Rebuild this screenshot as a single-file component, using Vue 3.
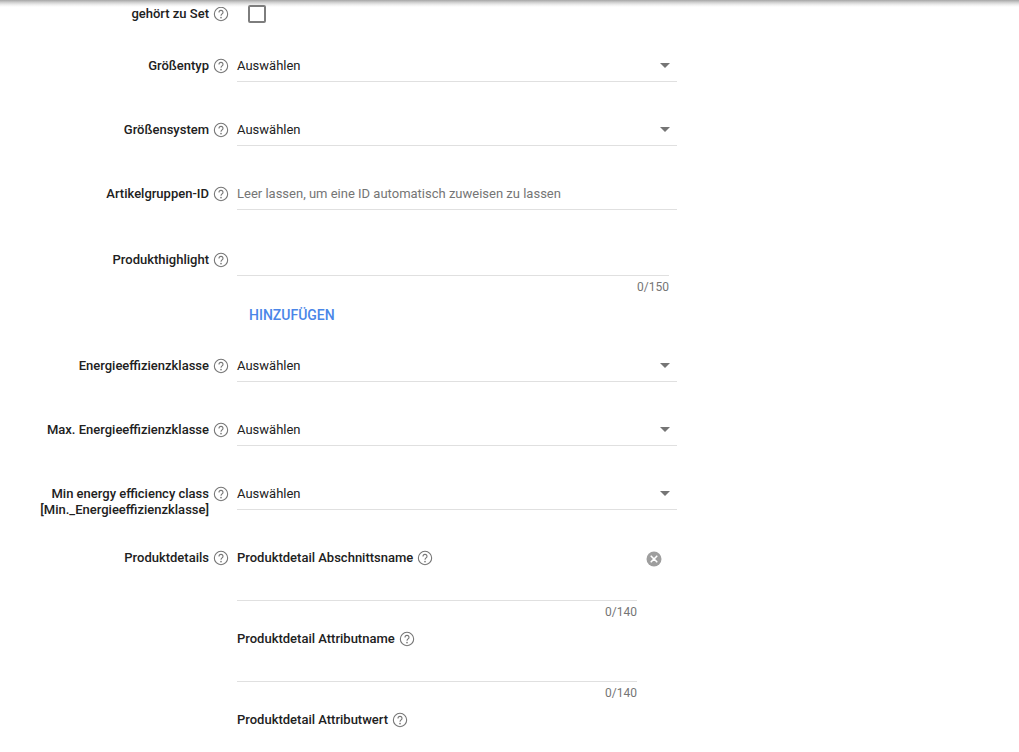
<script setup>
const help = 'M12 2a10 10 0 1 0 0 20 10 10 0 0 0 0-20z'
const rowsA = [
  { label: 'Größentyp' },
  { label: 'Größensystem' }
]
const rowsB = [
  { label: ['Energieeffizienzklasse'] },
  { label: ['Max. Energieeffizienzklasse'] },
  { label: ['Min energy efficiency class', '[Min._Energieeffizienzklasse]'] }
]
</script>

<template>
  <div class="page">
    <div class="shade"></div>

    <div class="row first">
      <div class="label"><span class="ltext">gehört zu Set</span></div>
      <svg class="help" viewBox="0 0 24 24"><path :d="help" class="ring"/><path class="mark" d="M9 9.6a3 3 0 0 1 6 0c0 2.2-3 2.4-3 5"/><circle class="dot" cx="12" cy="17.5" r="1.2"/></svg>
      <div class="check-wrap"><span class="check"></span></div>
    </div>

    <div v-for="r in rowsA" :key="r.label" class="row">
      <div class="label"><span class="ltext">{{ r.label }}</span></div>
      <svg class="help" viewBox="0 0 24 24"><path :d="help" class="ring"/><path class="mark" d="M9 9.6a3 3 0 0 1 6 0c0 2.2-3 2.4-3 5"/><circle class="dot" cx="12" cy="17.5" r="1.2"/></svg>
      <div class="field"><span>Auswählen</span><i class="caret"></i></div>
    </div>

    <div class="row short">
      <div class="label"><span class="ltext">Artikelgruppen-ID</span></div>
      <svg class="help" viewBox="0 0 24 24"><path :d="help" class="ring"/><path class="mark" d="M9 9.6a3 3 0 0 1 6 0c0 2.2-3 2.4-3 5"/><circle class="dot" cx="12" cy="17.5" r="1.2"/></svg>
      <div class="field placeholder"><span>Leer lassen, um eine ID automatisch zuweisen zu lassen</span></div>
    </div>

    <div class="row high">
      <div class="label"><span class="ltext">Produkthighlight</span></div>
      <svg class="help" viewBox="0 0 24 24"><path :d="help" class="ring"/><path class="mark" d="M9 9.6a3 3 0 0 1 6 0c0 2.2-3 2.4-3 5"/><circle class="dot" cx="12" cy="17.5" r="1.2"/></svg>
      <div class="high-col">
        <div class="blank b150"></div>
        <div class="count">0/150</div>
        <div class="add">HINZUFÜGEN</div>
      </div>
    </div>

    <div v-for="r in rowsB" :key="r.label[0]" class="row">
      <div class="label"><span v-for="l in r.label" :key="l" class="ltext block">{{ l }}</span></div>
      <svg class="help" viewBox="0 0 24 24"><path :d="help" class="ring"/><path class="mark" d="M9 9.6a3 3 0 0 1 6 0c0 2.2-3 2.4-3 5"/><circle class="dot" cx="12" cy="17.5" r="1.2"/></svg>
      <div class="field"><span>Auswählen</span><i class="caret"></i></div>
    </div>

    <div class="row details">
      <div class="label"><span class="ltext">Produktdetails</span></div>
      <svg class="help" viewBox="0 0 24 24"><path :d="help" class="ring"/><path class="mark" d="M9 9.6a3 3 0 0 1 6 0c0 2.2-3 2.4-3 5"/><circle class="dot" cx="12" cy="17.5" r="1.2"/></svg>
      <div class="detail-col">
        <div class="sub">
          <div class="sub-head">
            <span class="ltext">Produktdetail Abschnittsname</span>
            <svg class="help inner" viewBox="0 0 24 24"><path :d="help" class="ring"/><path class="mark" d="M9 9.6a3 3 0 0 1 6 0c0 2.2-3 2.4-3 5"/><circle class="dot" cx="12" cy="17.5" r="1.2"/></svg>
          </div>
          <div class="blank b140"></div>
          <div class="count">0/140</div>
        </div>
        <svg class="remove" viewBox="0 0 16 16"><circle cx="8" cy="8" r="7.5" fill="#9e9e9e"/><path d="M5.2 5.2l5.6 5.6M10.8 5.2l-5.6 5.6" stroke="#fff" stroke-width="1.6" stroke-linecap="round"/></svg>
        <div class="sub">
          <div class="sub-head">
            <span class="ltext">Produktdetail Attributname</span>
            <svg class="help inner" viewBox="0 0 24 24"><path :d="help" class="ring"/><path class="mark" d="M9 9.6a3 3 0 0 1 6 0c0 2.2-3 2.4-3 5"/><circle class="dot" cx="12" cy="17.5" r="1.2"/></svg>
          </div>
          <div class="blank b140"></div>
          <div class="count">0/140</div>
        </div>
        <div class="sub">
          <div class="sub-head">
            <span class="ltext">Produktdetail Attributwert</span>
            <svg class="help inner" viewBox="0 0 24 24"><path :d="help" class="ring"/><path class="mark" d="M9 9.6a3 3 0 0 1 6 0c0 2.2-3 2.4-3 5"/><circle class="dot" cx="12" cy="17.5" r="1.2"/></svg>
          </div>
        </div>
      </div>
    </div>
  </div>
</template>

<style scoped>
.page {
  position: relative;
  width: 1019px;
  height: 752px;
  overflow: hidden;
  background: #fff;
  font-family: Roboto, "Liberation Sans", sans-serif;
  font-size: 13px;
  line-height: 16px;
  color: #212121;
}
.shade {
  position: absolute;
  left: 0;
  top: 0;
  right: 0;
  height: 7px;
  background: linear-gradient(#a6a6a6, #d0d0d0 35%, #f0f0f0 70%, #fff);
}
.row {
  display: flex;
  align-items: flex-start;
  height: 64px;
}
.first {
  height: 49px;
  padding-top: 6px;
  box-sizing: border-box;
}
.short { height: 66px; }
.high { height: 106px; }
.details { height: 200px; }
.label {
  width: 209px;
  flex: none;
  text-align: right;
  padding-top: 9px;
}
.first .label { padding-top: 0; }
.ltext {
  font-weight: 500;
  color: #212121;
}
.block { display: block; }
.help {
  width: 16px;
  height: 16px;
  flex: none;
  margin: 9px 8px 0 4px;
}
.first .help { margin-top: 0; }
.ring, .mark {
  fill: none;
  stroke: #757575;
  stroke-width: 1.6;
}
.dot { fill: #757575; }
.check-wrap { padding-left: 11px; }
.check {
  position: relative;
  z-index: 1;
  display: block;
  width: 14px;
  height: 14px;
  margin-top: -1px;
  border: 2px solid #7d7d7d;
  border-radius: 2px;
}
.field {
  position: relative;
  width: 440px;
  height: 33px;
  box-sizing: border-box;
  padding-top: 9px;
  border-bottom: 1px solid #e0e0e0;
}
.placeholder { color: #757575; }
.caret {
  position: absolute;
  right: 7px;
  top: 14px;
  border-left: 5.5px solid transparent;
  border-right: 5.5px solid transparent;
  border-top: 5.5px solid #757575;
}
.high-col { width: 432px; }
.blank { border-bottom: 1px solid #e0e0e0; }
.b150 { height: 33px; box-sizing: border-box; }
.count {
  text-align: right;
  font-size: 12px;
  line-height: 16px;
  color: #757575;
  padding-top: 3px;
}
.add {
  margin: 12px 0 0 12px;
  font-size: 14px;
  font-weight: 500;
  line-height: 16px;
  color: #4a86e8;
}
.detail-col {
  position: relative;
  width: 400px;
}
.sub-head {
  display: flex;
  align-items: flex-start;
  padding-top: 9px;
}
.inner { margin: 0 0 0 4px; }
.sub { height: 81px; }
.sub .b140 { height: 35px; box-sizing: content-box; margin-top: -1px; }
.remove {
  position: absolute;
  left: 409px;
  top: 10px;
  width: 16px;
  height: 16px;
}
</style>
